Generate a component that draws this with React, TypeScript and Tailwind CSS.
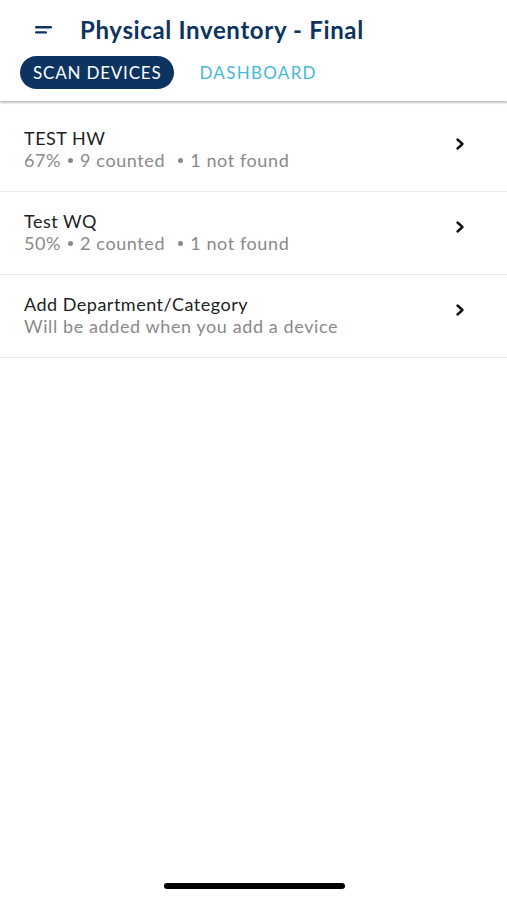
import React from 'react';

const rows = [
  { title: 'TEST HW', pct: '67%', counted: '9 counted', missing: '1 not found' },
  { title: 'Test WQ', pct: '50%', counted: '2 counted', missing: '1 not found' },
];

function Chevron() {
  return (
    <svg width="14" height="14" viewBox="0 0 14 14" className="shrink-0">
      <path d="M4.5 2.5 L9.5 7 L4.5 11.5" fill="none" stroke="#111" strokeWidth="2.4" strokeLinecap="round" strokeLinejoin="round" />
    </svg>
  );
}

function Dot() {
  return <span className="inline-block w-[5px] h-[5px] rounded-full bg-[#8a8a8a] align-middle mx-[7px] mb-[3px]" />;
}

function Row({ title, children }: { title: string; children: React.ReactNode }) {
  return (
    <div className="flex items-center justify-between pl-6 pr-10 h-[83px] border-b border-[#e8e8e8]">
      <div className="flex flex-col -mt-[2px]">
        <span className="text-[18px] leading-[22px] tracking-[0.5px] text-[#222]">{title}</span>
        <span className="text-[18px] leading-[22px] tracking-[0.6px] text-[#8a8a8a]">{children}</span>
      </div>
      <div className="-mt-3">
        <Chevron />
      </div>
    </div>
  );
}

export default function App() {
  return (
    <div className="w-[507px] h-[900px] bg-white relative overflow-hidden" style={{ fontFamily: 'Lato, "Noto Sans", sans-serif' }}>
      <div className="shadow-[0_2px_2px_rgba(0,0,0,0.25)] relative z-10">
        <div className="flex items-center h-[56px] pt-[3px] pl-[35px] gap-[27px]">
          <svg width="18" height="10" viewBox="0 0 18 10">
            <rect x="0" y="1" width="17" height="2.4" rx="1.2" fill="#0d3461" />
            <rect x="0" y="6.2" width="12" height="2.4" rx="1.2" fill="#0d3461" />
          </svg>
          <span className="text-[24px] font-bold text-[#0d3461] tracking-[0.65px]">Physical Inventory - Final</span>
        </div>
        <div className="flex items-center h-[45px] pl-[20px] pb-[12px] gap-[25px]">
          <div className="h-[33px] px-[13px] rounded-full bg-[#0d3461] text-white text-[17px] tracking-[0.8px] flex items-center">SCAN DEVICES</div>
          <span className="text-[17px] tracking-[1.3px] text-[#45b9d8]">DASHBOARD</span>
        </div>
      </div>
      <div className="pt-[8px]">
        {rows.map((r) => (
          <Row key={r.title} title={r.title}>
            {r.pct}
            <Dot />
            {r.counted}
            <span className="ml-[6px]" />
            <Dot />
            {r.missing}
          </Row>
        ))}
        <Row title="Add Department/Category">Will be added when you add a device</Row>
      </div>
      <div className="absolute left-[164px] bottom-[11px] w-[181px] h-[6px] rounded-full bg-black" />
    </div>
  );
}
